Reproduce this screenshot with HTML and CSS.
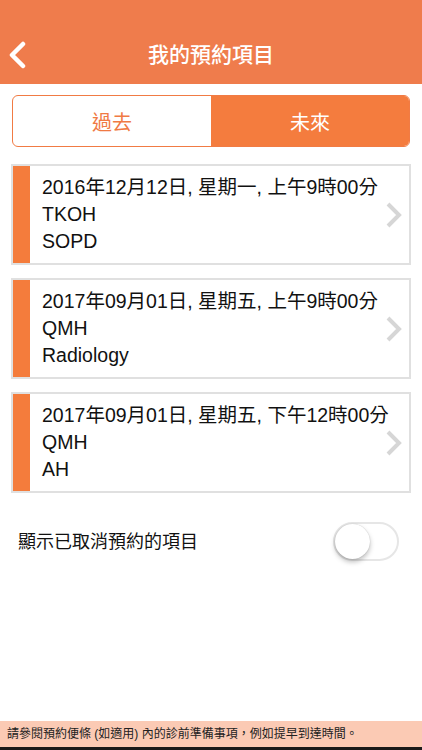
FILE: index.html
```html
<!DOCTYPE html>
<html lang="zh-Hant">
<head>
    <meta charset="utf-8">
    <link rel="stylesheet" href="styles.css">
</head>
<body>
<div class="page">
    <header class="topbar">
        <a class="back">
            <svg width="20" height="28" viewBox="0 0 20 28"><path d="M16 3 L5 14 L16 25" fill="none" stroke="#fff" stroke-width="4.5" stroke-linecap="round" stroke-linejoin="round"/></svg>
        </a>
        <h1 class="title">我的預約項目</h1>
    </header>

    <div class="segment">
        <div class="seg-item">過去</div>
        <div class="seg-item active">未來</div>
    </div>

    <div class="list">
        <div class="card">
            <div class="strip"></div>
            <div class="info">
                <div>2016年12月12日, 星期一, 上午9時00分</div>
                <div>TKOH</div>
                <div>SOPD</div>
            </div>
            <svg class="chev" width="22" height="28" viewBox="0 0 22 28"><path d="M5 3 L16 14 L5 25" fill="none" stroke="#d6d6d6" stroke-width="4"/></svg>
        </div>
        <div class="card">
            <div class="strip"></div>
            <div class="info">
                <div>2017年09月01日, 星期五, 上午9時00分</div>
                <div>QMH</div>
                <div>Radiology</div>
            </div>
            <svg class="chev" width="22" height="28" viewBox="0 0 22 28"><path d="M5 3 L16 14 L5 25" fill="none" stroke="#d6d6d6" stroke-width="4"/></svg>
        </div>
        <div class="card">
            <div class="strip"></div>
            <div class="info">
                <div>2017年09月01日, 星期五, 下午12時00分</div>
                <div>QMH</div>
                <div>AH</div>
            </div>
            <svg class="chev" width="22" height="28" viewBox="0 0 22 28"><path d="M5 3 L16 14 L5 25" fill="none" stroke="#d6d6d6" stroke-width="4"/></svg>
        </div>
    </div>

    <div class="toggle-row">
        <span>顯示已取消預約的項目</span>
        <div class="switch"><div class="knob"></div></div>
    </div>

    <footer class="notice">請參閱預約便條 (如適用) 內的診前準備事項，例如提早到達時間。</footer>
</div>
</body>
</html>
```

FILE: styles.css
```css
body {
    margin: 0;
    background: #fff;
    font-family: "Liberation Sans", "Noto Sans CJK TC", sans-serif;
    color: #111;
}
.page {
    height: 750px;
    display: flex;
    flex-direction: column;
}
.topbar {
    height: 84px;
    background-color: #ef7c4c;
    display: flex;
    align-items: flex-end;
    justify-content: center;
    position: relative;
}
.back {
    position: absolute;
    left: 7px;
    top: 41px;
}
.title {
    margin: 0 0 14px;
    font-size: 21px;
    font-weight: 500;
    color: #fff;
    line-height: 30px;
}
.segment {
    margin: 11px 12px 0;
    height: 52px;
    display: flex;
    border: 1.5px solid #f17b44;
    border-radius: 6px;
    overflow: hidden;
    box-sizing: border-box;
}
.seg-item {
    flex: 1;
    display: flex;
    align-items: center;
    justify-content: center;
    font-size: 20px;
    color: #f07a44;
}
.seg-item.active {
    background-color: #f47c3e;
    color: #fff;
}
.list {
    margin: 17px 11px 0;
    display: flex;
    flex-direction: column;
    gap: 13px;
}
.card {
    height: 101px;
    box-sizing: border-box;
    border: 2px solid #e0e0e0;
    display: flex;
    align-items: stretch;
    position: relative;
}
.strip {
    width: 17px;
    background-color: #f47c3c;
}
.info {
    padding: 8px 0 0 12px;
    font-size: 19.5px;
    line-height: 27px;
}
.chev {
    position: absolute;
    right: 4px;
    top: 35px;
}
.toggle-row {
    margin: 29px 23px 0 18px;
    display: flex;
    align-items: center;
    justify-content: space-between;
    font-size: 18px;
}
.toggle-row span {
    margin-top: -3px;
}
.switch {
    width: 66px;
    height: 39px;
    box-sizing: border-box;
    border: 2px solid #e6e6e6;
    border-radius: 20px;
    position: relative;
}
.knob {
    position: absolute;
    left: 0;
    top: 0;
    width: 35px;
    height: 35px;
    border-radius: 50%;
    background: #fff;
    box-shadow: 0 3px 5px rgba(0, 0, 0, 0.25), 0 0 1px rgba(0, 0, 0, 0.25);
}
.notice {
    margin-top: auto;
    background-color: #fbcab4;
    font-size: 12px;
    color: #222;
    padding: 4px 7px 4px;
    line-height: 18px;
    border-bottom: 3px solid #1a1a1a;
}
```
